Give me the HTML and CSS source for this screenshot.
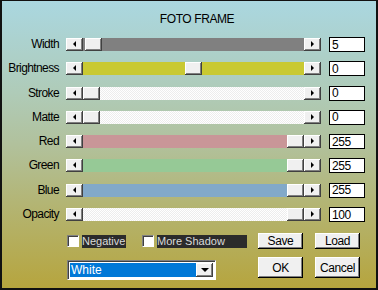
FILE: index.html
```html
<!doctype html>

<html lang="en">
  <head>
    <meta charset="utf-8">
    <title>Foto Frame</title>
    <link rel="stylesheet" href="styles.css">
  </head>

  <body>
    <div class="dialog">
      <h1 class="title">FOTO FRAME</h1>

      <div class="rows">
        <div class="row">
          <label>Width</label>
          <div class="slider">
            <span class="btn left"></span>
            <div class="track gray"><span class="thumb" style="margin-left: 2px"></span></div>
            <span class="btn right"></span>
          </div>
          <input class="val" value="5">
        </div>
        <div class="row">
          <label>Brightness</label>
          <div class="slider">
            <span class="btn left"></span>
            <div class="track yellow"><span class="thumb" style="margin-left: 102px"></span></div>
            <span class="btn right"></span>
          </div>
          <input class="val" value="0">
        </div>
        <div class="row">
          <label>Stroke</label>
          <div class="slider">
            <span class="btn left"></span>
            <div class="track white"><span class="thumb" style="margin-left: 0px"></span></div>
            <span class="btn right"></span>
          </div>
          <input class="val" value="0">
        </div>
        <div class="row">
          <label>Matte</label>
          <div class="slider">
            <span class="btn left"></span>
            <div class="track white"><span class="thumb" style="margin-left: 0px"></span></div>
            <span class="btn right"></span>
          </div>
          <input class="val" value="0">
        </div>
        <div class="row">
          <label>Red</label>
          <div class="slider">
            <span class="btn left"></span>
            <div class="track red"><span class="thumb" style="margin-left: 204px"></span></div>
            <span class="btn right"></span>
          </div>
          <input class="val" value="255">
        </div>
        <div class="row">
          <label>Green</label>
          <div class="slider">
            <span class="btn left"></span>
            <div class="track green"><span class="thumb" style="margin-left: 204px"></span></div>
            <span class="btn right"></span>
          </div>
          <input class="val" value="255">
        </div>
        <div class="row">
          <label>Blue</label>
          <div class="slider">
            <span class="btn left"></span>
            <div class="track blue"><span class="thumb" style="margin-left: 204px"></span></div>
            <span class="btn right"></span>
          </div>
          <input class="val" value="255">
        </div>
        <div class="row">
          <label>Opacity</label>
          <div class="slider">
            <span class="btn left"></span>
            <div class="track white"><span class="thumb" style="margin-left: 204px"></span></div>
            <span class="btn right"></span>
          </div>
          <input class="val" value="100">
        </div>
      </div>

      <div class="bottom">
        <div class="leftcol">
          <div class="checks">
            <span class="box"></span>
            <span class="cap neg">Negative</span>
            <span class="box second"></span>
            <span class="cap shadow">More Shadow</span>
          </div>
          <div class="combo">
            <span class="sel">White</span>
            <span class="drop"></span>
          </div>
        </div>
        <div class="buttons">
          <button class="small">Save</button>
          <button class="small">Load</button>
          <button class="big">OK</button>
          <button class="big">Cancel</button>
        </div>
      </div>
    </div>
  </body>
</html>
```

FILE: styles.css
```css
:root {
  --face: #f0f0f0;
  --shade: #808080;
  --dark: #404040;
}

html, body {
margin: 0;
padding: 0;
}

body {
font-family: "Liberation Sans", Arial, sans-serif;
font-size: 11px;
color: #000;
}

.dialog {
width: 378px;
height: 290px;
box-sizing: border-box;
border: 2px solid #111;
border-top-width: 1px;
background: linear-gradient(to bottom, #aad7e0 0%, #afcbb8 32%, #b1c19c 50%, #b3b575 70%, #b6a53e 100%);
}

.title {
margin: 0;
padding: 11px 0 0 16px;
font-size: 12px;
font-weight: normal;
line-height: 14px;
letter-spacing: -0.4px;
text-align: center;
}

.rows {
display: flex;
flex-direction: column;
gap: 9.3px;
margin-top: 11px;
}

.row {
display: flex;
align-items: center;
height: 15px;
}

.row label {
width: 57px;
margin-right: 7px;
text-align: right;
font-size: 12px;
letter-spacing: -0.6px;
line-height: 15px;
}

.slider {
display: flex;
width: 255px;
height: 13px;
}

.btn, .thumb {
flex: 0 0 17px;
width: 17px;
height: 13px;
box-sizing: border-box;
background: var(--face);
box-shadow: inset -1px -1px var(--dark), inset 1px 1px #fff, inset -2px -2px var(--shade);
display: flex;
align-items: center;
justify-content: center;
}

.btn::after {
content: "";
border-top: 3px solid transparent;
border-bottom: 3px solid transparent;
margin-bottom: 1px;
}

.btn.left::after {
border-right: 3px solid #000;
}

.btn.right::after {
border-left: 3px solid #000;
}

.track {
flex: 1;
display: flex;
}

.track.gray { background: #808080; }
.track.yellow { background: #c9c932; }
.track.red { background: #c99698; }
.track.green { background: #96c996; }
.track.blue { background: #82a9c9; }
.track.white {
background: repeating-conic-gradient(#fff 0 25%, #ededed 0 50%) 0 0 / 2px 2px;
}

.val {
width: 36px;
height: 15px;
box-sizing: border-box;
margin: 0 0 0 8px;
padding: 0 0 0 2px;
border: 1px solid #000;
background: #fff;
font: 12px "Liberation Sans", Arial, sans-serif;
letter-spacing: -0.4px;
color: #000;
outline: none;
}

.bottom {
display: flex;
margin-top: 11px;
padding-left: 65px;
}

.leftcol {
width: 191px;
}

.checks {
display: flex;
align-items: center;
height: 16px;
}

.box {
width: 12px;
height: 12px;
box-sizing: border-box;
background: #fff;
border: 1px solid;
border-color: var(--shade) #fff #fff var(--shade);
box-shadow: inset 1px 1px var(--dark);
margin-right: 3px;
}

.box.second {
margin-left: 16px;
}

.cap {
height: 13px;
line-height: 13px;
background: #2b2b2b;
color: #dadada;
}

.cap.neg {
width: 44px;
}

.cap.shadow {
width: 90px;
}

.combo {
display: flex;
width: 149px;
height: 20px;
box-sizing: border-box;
margin-top: 11px;
padding: 2px;
background: #fff;
border: 1px solid;
border-color: var(--shade) #fff #fff var(--shade);
box-shadow: inset 1px 1px var(--dark);
}

.sel {
flex: 1;
background: #0078d7;
color: #fff;
font-size: 12px;
line-height: 15px;
padding-left: 1px;
}

.drop {
width: 17px;
box-sizing: border-box;
background: var(--face);
box-shadow: inset -1px -1px var(--dark), inset 1px 1px #fff, inset -2px -2px var(--shade);
display: flex;
align-items: center;
justify-content: center;
}

.drop::after {
content: "";
border-left: 4px solid transparent;
border-right: 4px solid transparent;
border-top: 4px solid #000;
}

.buttons {
display: grid;
grid-template-columns: 45px 45px;
grid-template-rows: 16px 21px;
column-gap: 12px;
row-gap: 8px;
}

.buttons button {
margin: 0;
padding: 0;
border: 0;
background: var(--face);
box-shadow: inset -1px -1px #000, inset 1px 1px #fff, inset -2px -2px var(--shade);
font: 12px "Liberation Sans", Arial, sans-serif;
letter-spacing: -0.4px;
color: #000;
}
```
